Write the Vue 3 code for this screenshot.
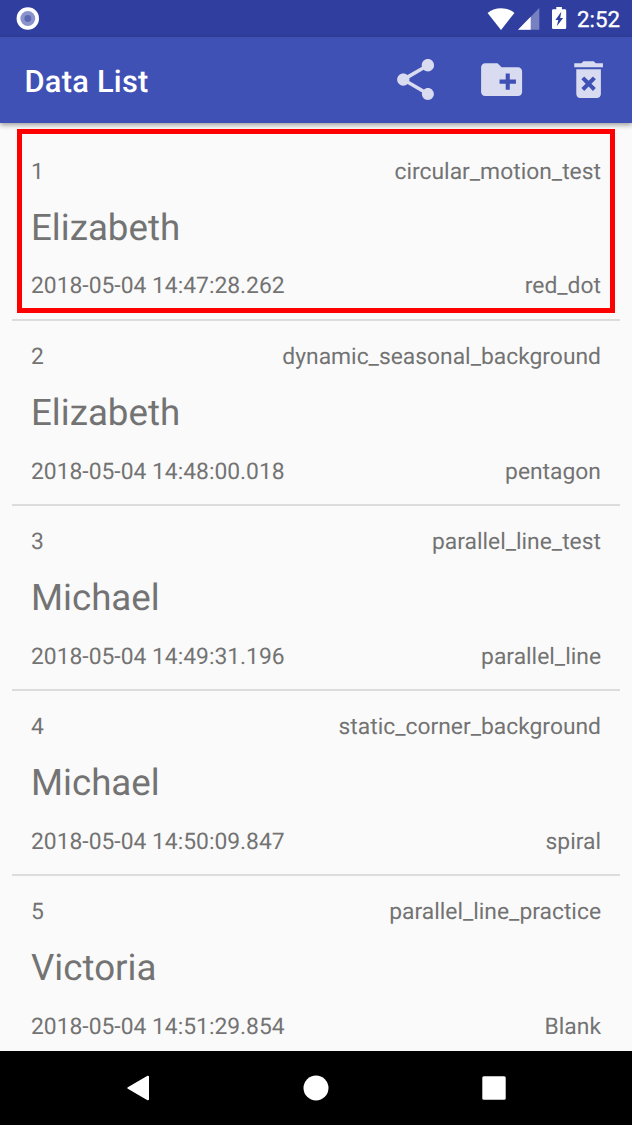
<script setup>
const records = [
  { id: 1, name: 'Elizabeth', time: '2018-05-04 14:47:28.262', test: 'circular_motion_test', shape: 'red_dot', marked: true },
  { id: 2, name: 'Elizabeth', time: '2018-05-04 14:48:00.018', test: 'dynamic_seasonal_background', shape: 'pentagon' },
  { id: 3, name: 'Michael', time: '2018-05-04 14:49:31.196', test: 'parallel_line_test', shape: 'parallel_line' },
  { id: 4, name: 'Michael', time: '2018-05-04 14:50:09.847', test: 'static_corner_background', shape: 'spiral' },
  { id: 5, name: 'Victoria', time: '2018-05-04 14:51:29.854', test: 'parallel_line_practice', shape: 'Blank' },
]
</script>

<template>
  <div class="screen">
    <header class="status">
      <svg class="record" width="24" height="24" viewBox="0 0 24 24">
        <circle cx="11.800" cy="11.500" r="11.200" fill="#fff" />
        <circle cx="11.800" cy="11.500" r="7.400" fill="#8a93cc" />
        <circle cx="11.800" cy="11.500" r="3.400" fill="#5c68b4" />
      </svg>
      <div class="indicators">
        <svg class="wifi" width="28" height="24" viewBox="0 0 28 24">
          <path fill="#fff" d="M14 23 .6 6C4 3 8.800 1.200 14 1.200S24 3 27.400 6z" />
        </svg>
        <svg class="cell" width="22" height="22" viewBox="0 0 22 22">
          <path fill="#7780c0" d="M0 21.700 21.300 0v21.700z" />
          <path fill="#fff" d="M0 21.700 12.700 8.800v12.900z" />
        </svg>
        <svg class="battery" width="15" height="23" viewBox="0 0 15 23">
          <path fill="#fff" fill-rule="evenodd" d="M4.300 0h5.600v2.200h3q1.300 0 1.300 1.300v17.300q0 1.300-1.300 1.300H1.300Q0 22.100 0 20.800V3.500Q0 2.200 1.300 2.200h3zM9.300 4.800 3.400 12.900h2.900L4.800 19.300l6.300-8.300H8.200z" />
        </svg>
        <span class="clock">2:52</span>
      </div>
    </header>

    <div class="appbar">
      <h1>Data List</h1>
      <nav class="actions">
        <svg viewBox="0 0 24 24"><path d="M18 16.080c-.76 0-1.440.3-1.960.77L8.910 12.700c.05-.23.09-.46.09-.7s-.04-.47-.09-.7l7.050-4.110c.54.5 1.250.81 2.040.81 1.660 0 3-1.340 3-3s-1.340-3-3-3-3 1.340-3 3c0 .24.04.47.09.7L8.040 9.810C7.500 9.310 6.790 9 6 9c-1.660 0-3 1.340-3 3s1.340 3 3 3c.79 0 1.500-.31 2.040-.81l7.120 4.160c-.05.21-.08.43-.08.65 0 1.610 1.310 2.920 2.920 2.920s2.920-1.310 2.920-2.920-1.310-2.920-2.920-2.920z" /></svg>
        <svg viewBox="0 0 24 24"><path d="M20 6h-8l-2-2H4c-1.110 0-1.990.89-1.990 2L2 18c0 1.110.89 2 2 2h16c1.110 0 2-.89 2-2V8c0-1.110-.89-2-2-2zm-1 8h-3v3h-2v-3h-3v-2h3V9h2v3h3v2z" /></svg>
        <svg viewBox="0 0 24 24"><path d="M6 19c0 1.100.9 2 2 2h8c1.100 0 2-.9 2-2V7H6v12zm2.460-7.120l1.410-1.410L12 12.590l2.120-2.120 1.410 1.410L13.410 14l2.120 2.120-1.410 1.410L12 15.410l-2.120 2.120-1.410-1.410L10.590 14l-2.130-2.120zM15.500 4l-1-1h-5l-1 1H5v2h14V4h-3.500z" /></svg>
      </nav>
    </div>

    <main class="list">
      <article v-for="r in records" :key="r.id" class="row" :class="{ marked: r.marked }">
        <div class="line"><span>{{ r.id }}</span><span>{{ r.test }}</span></div>
        <div class="name">{{ r.name }}</div>
        <div class="line"><span>{{ r.time }}</span><span>{{ r.shape }}</span></div>
      </article>
    </main>

    <footer class="navbar">
      <svg width="24" height="26" viewBox="0 0 24 26"><path fill="#fff" stroke="#fff" stroke-width="2" stroke-linejoin="round" d="M2.300 13 22 1.700v22.600z" /></svg>
      <svg width="26" height="26" viewBox="0 0 26 26"><circle cx="13" cy="13" r="12.500" fill="#fff" /></svg>
      <svg width="24" height="24" viewBox="0 0 24 24"><rect x=".3" y=".3" width="23.400" height="23.400" rx="1.500" fill="#fff" /></svg>
    </footer>
  </div>
</template>

<style>
body {
  margin: 0;
}
</style>

<style scoped>
.screen {
  width: 632px;
  height: 1125px;
  display: flex;
  flex-direction: column;
  overflow: hidden;
  background: #fafafa;
  color: #737373;
  font-family: Roboto, "Liberation Sans", sans-serif;
  text-rendering: geometricPrecision;
}
.screen svg {
  display: block;
  flex: none;
}
.status {
  height: 37px;
  flex: none;
  box-sizing: border-box;
  padding: 0 12px 0 16px;
  display: flex;
  align-items: center;
  justify-content: space-between;
  background: #303f9f;
}
.indicators {
  display: flex;
  align-items: center;
  color: #fff;
}
.cell {
  margin-left: 3px;
}
.battery {
  margin: 0 10px 0 12px;
}
.clock {
  padding-top: 3px;
  font-size: 22.3px;
  font-weight: 400;
  -webkit-text-stroke: 0.3px #fff;
  line-height: 37px;
}
.appbar {
  height: 86px;
  flex: none;
  box-sizing: border-box;
  padding: 0 19px 0 24.5px;
  display: flex;
  align-items: center;
  justify-content: space-between;
  background: #3f51b5;
  box-shadow: 0 2px 5px rgba(0, 0, 0, 0.38);
  position: relative;
}
h1 {
  margin: 4px 0 0;
  color: #fff;
  font-size: 30.8px;
  font-weight: 500;
  letter-spacing: 0.25px;
  line-height: 36px;
}
.actions {
  display: flex;
  gap: 37.2px;
}
.actions svg {
  width: 49.2px;
  height: 49.2px;
  fill: #d9dcf0;
}
.list {
  flex: 1;
  min-height: 0;
  padding: 12.6px 12px 0;
  overflow: hidden;
}
.row {
  position: relative;
  box-sizing: border-box;
  height: 185.1px;
  padding: 22px 19px 0;
  border-bottom: 2px solid #dcdcdc;
}
.row.marked::after {
  content: "";
  position: absolute;
  left: 5px;
  top: -6.6px;
  width: 588px;
  height: 174px;
  border: 5px solid #f00;
}
.line {
  display: flex;
  justify-content: space-between;
  font-size: 22.85px;
  line-height: 28px;
}
.name {
  margin: 19px 0 21.85px;
  font-size: 36.7px;
  line-height: 46px;
}
.navbar {
  height: 74px;
  flex: none;
  box-sizing: border-box;
  padding: 0 126px;
  display: flex;
  align-items: center;
  justify-content: space-between;
  background: #000;
}
</style>
